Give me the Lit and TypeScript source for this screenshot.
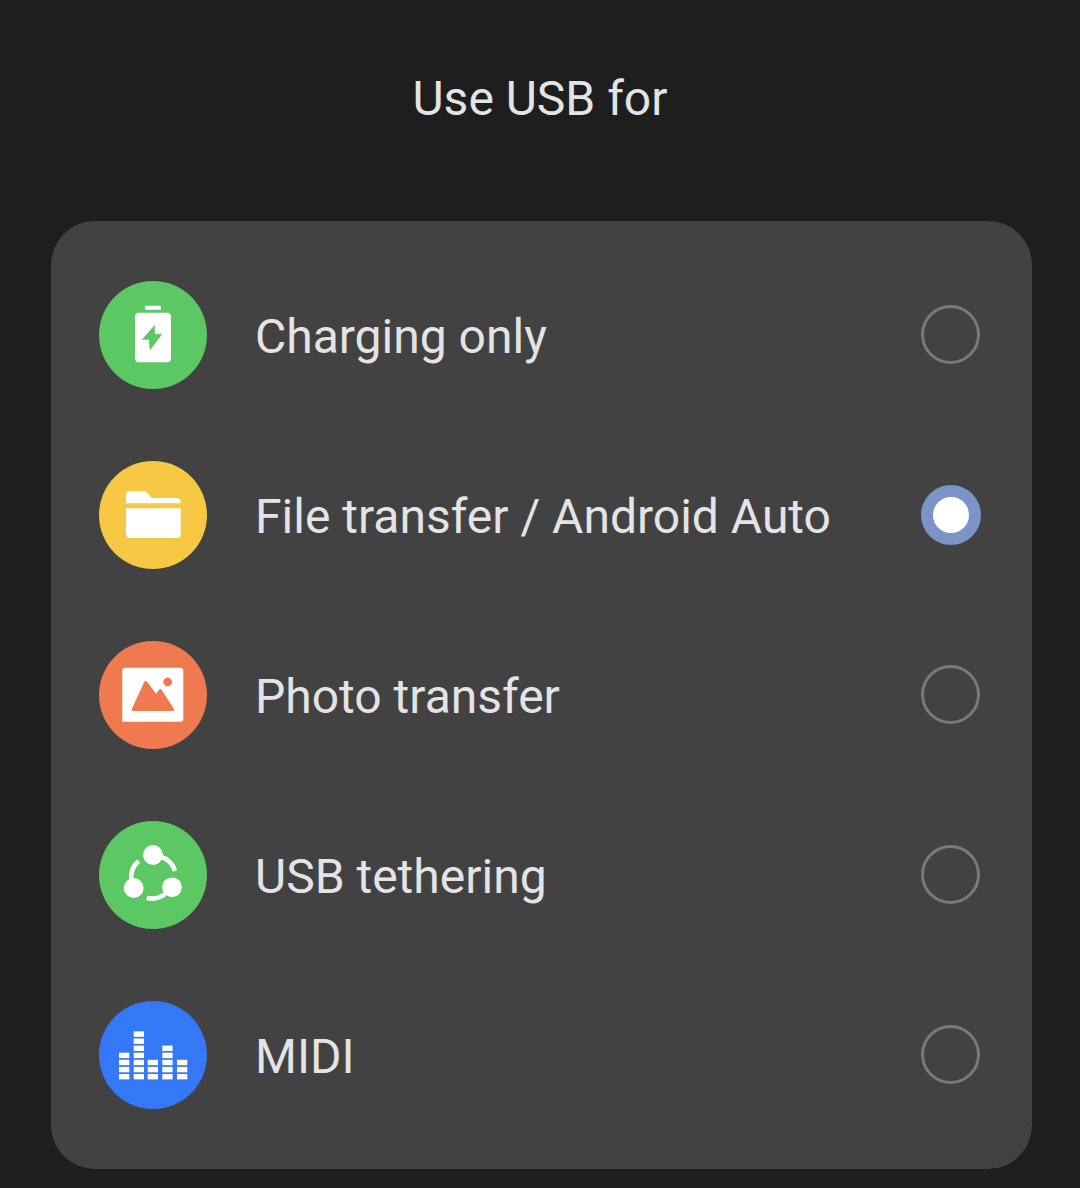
import { LitElement, html, css, svg } from 'lit';
import { customElement, state } from 'lit/decorators.js';

type UsbOption = {
  label: string;
  color: string;
  icon: unknown;
};

const GREEN = '#5cc864';
const YELLOW = '#f6c844';
const ORANGE = '#f07a50';
const BLUE = '#3578f6';

const batteryIcon = svg`
  <rect x="46" y="24.7" width="16" height="4" rx="0.6" fill="#fff" />
  <rect x="36" y="31.7" width="36" height="49.6" rx="4" fill="#fff" />
  <path d="M55.6 44.5 43.4 58.4h6.9L51 68.8 62.9 53.2h-7.3z" fill="${GREEN}" stroke="${GREEN}" stroke-width="0.6" stroke-linejoin="round" />
`;

const folderIcon = svg`
  <path d="M27 42.3V34a4 4 0 0 1 4-3.7h14.5a3 3 0 0 1 2.2 1l5 5.7H77.5a4 4 0 0 1 4.2 4v1.3z" fill="#fff" />
  <path d="M27 47.3h54.7V73a4 4 0 0 1-4 4H31a4 4 0 0 1-4-4z" fill="#fff" />
`;

const photoIcon = svg`
  <path d="M26.3 26.7h55a3 3 0 0 1 3 3v48a3 3 0 0 1-3 3H23.3V29.7a3 3 0 0 1 3-3z" fill="#fff" />
  <circle cx="68.7" cy="41" r="4.4" fill="${ORANGE}" />
  <path d="M46.7 41.5 34.2 68.6H73.6L61.4 49.6 57.2 55.4z" fill="${ORANGE}" stroke="${ORANGE}" stroke-width="3" stroke-linejoin="round" />
`;

const tetherIcon = svg`
  <circle cx="54" cy="34" r="9.9" fill="#fff" />
  <circle cx="34.7" cy="67" r="9.9" fill="#fff" />
  <circle cx="73" cy="66.3" r="9.9" fill="#fff" />
  <g fill="none" stroke="#fff" stroke-width="4.6">
    <path d="M62 35.7A21.7 21.7 0 0 1 76 50" />
    <path d="M39.7 40A21.7 21.7 0 0 0 32.3 59" />
    <path d="M47.7 77A21.7 21.7 0 0 0 66 73" />
  </g>
`;

const midiColumns = [
  { x: 20, cells: 4 },
  { x: 34.7, cells: 7 },
  { x: 48.7, cells: 3 },
  { x: 63.3, cells: 5 },
  { x: 78, cells: 3 },
];

const midiIcon = midiColumns.map((col) =>
  Array.from(
    { length: col.cells },
    (_, i) => svg`<rect x="${col.x}" y="${73 - i * 7.1}" width="10.3" height="5.4" fill="#fff" />`,
  ),
);

const OPTIONS: UsbOption[] = [
  { label: 'Charging only', color: GREEN, icon: batteryIcon },
  { label: 'File transfer / Android Auto', color: YELLOW, icon: folderIcon },
  { label: 'Photo transfer', color: ORANGE, icon: photoIcon },
  { label: 'USB tethering', color: GREEN, icon: tetherIcon },
  { label: 'MIDI', color: BLUE, icon: midiIcon },
];

@customElement('app-root')
class AppRoot extends LitElement {
  static styles = css`
    :host {
      display: block;
      height: 1188px;
      overflow: hidden;
      background: #1e1e1e;
      font-family: Roboto, 'Noto Sans', sans-serif;
      color: #e4e4e4;
    }

    .title {
      display: flex;
      align-items: center;
      justify-content: center;
      height: 196px;
      margin-bottom: 25px;
      font-size: 48px;
    }

    .card {
      margin: 0 48px 0 51px;
      padding: 24px 0;
      border-radius: 44px;
      background: #424242;
    }

    .row {
      display: flex;
      align-items: center;
      height: 180px;
      padding: 0 51px 0 48px;
    }

    .icon {
      flex: none;
      width: 108px;
      height: 108px;
      border-radius: 50%;
    }

    .icon svg {
      display: block;
    }

    .label {
      flex: 1;
      margin-left: 48px;
      padding-top: 3px;
      font-size: 48px;
    }

    .radio {
      flex: none;
      box-sizing: border-box;
      width: 59px;
      height: 59px;
      margin: 0 1px 1px 0;
      border: 3.5px solid #7a7a7a;
      border-radius: 50%;
    }

    .radio--checked {
      display: flex;
      align-items: center;
      justify-content: center;
      width: 60px;
      height: 60px;
      margin: 0;
      border: none;
      background: #7b93c6;
    }

    .radio--checked::after {
      content: '';
      width: 36px;
      height: 36px;
      border-radius: 50%;
      background: #fff;
    }
  `;

  @state()
  selected = 1;

  render() {
    return html`
      <div class="title">Use USB for</div>
      <div class="card">
        ${OPTIONS.map(
          (option, i) => html`
            <div class="row" @click=${() => (this.selected = i)}>
              <div class="icon" style="background: ${option.color}">
                <svg width="108" height="108" viewBox="0 0 108 108">${option.icon}</svg>
              </div>
              <div class="label">${option.label}</div>
              <div class="radio ${i === this.selected ? 'radio--checked' : ''}"></div>
            </div>
          `,
        )}
      </div>
    `;
  }
}
